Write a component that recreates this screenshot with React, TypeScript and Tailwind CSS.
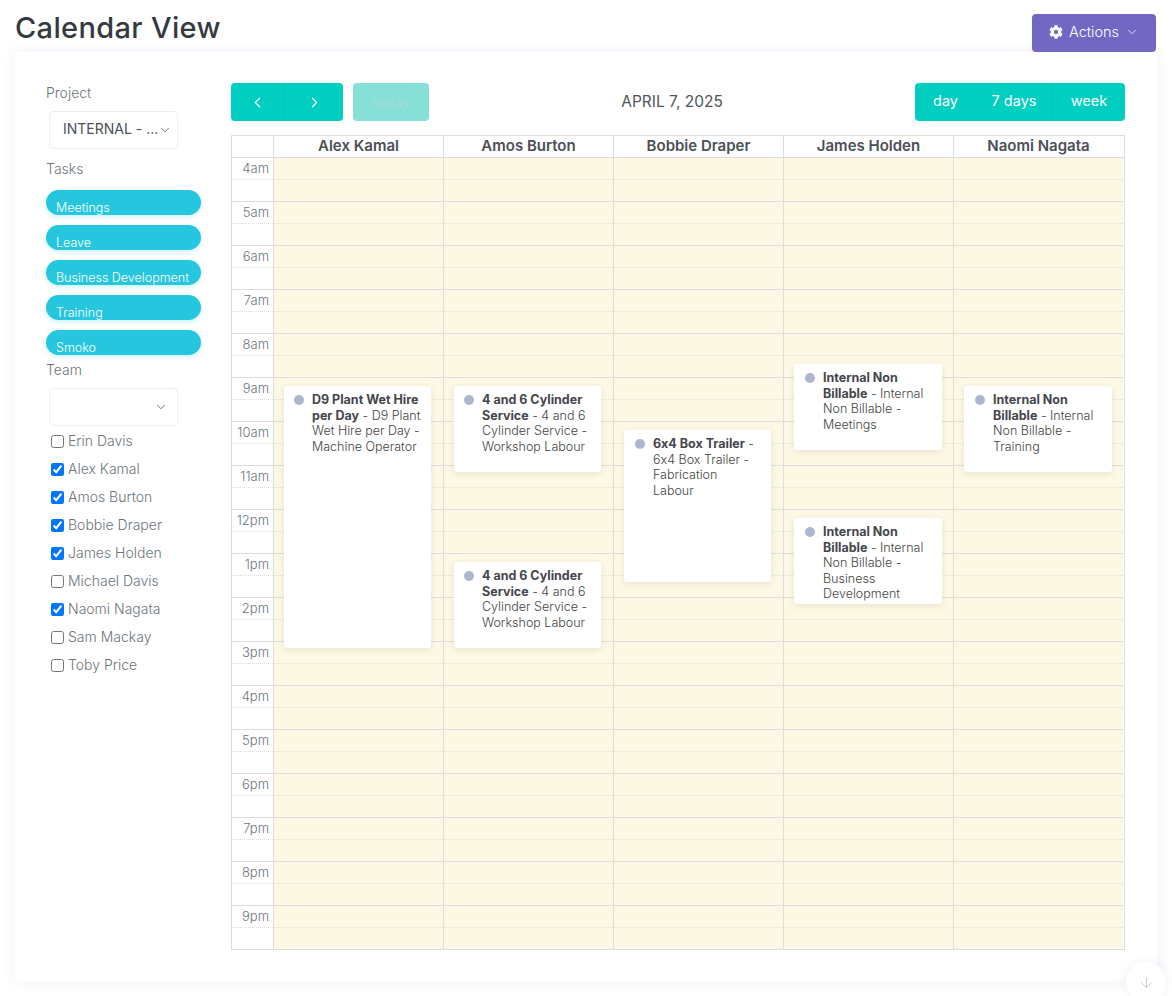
import { ChevronDown, ChevronLeft, ChevronRight, ArrowDown } from "lucide-react";
import { FaCog } from "react-icons/fa";

const HOURS = ["4am", "5am", "6am", "7am", "8am", "9am", "10am", "11am", "12pm", "1pm", "2pm", "3pm", "4pm", "5pm", "6pm", "7pm", "8pm", "9pm"];
const TASKS = ["Meetings", "Leave", "Business Development", "Training", "Smoko"];
const TEAM = [
  { name: "Erin Davis", checked: false },
  { name: "Alex Kamal", checked: true },
  { name: "Amos Burton", checked: true },
  { name: "Bobbie Draper", checked: true },
  { name: "James Holden", checked: true },
  { name: "Michael Davis", checked: false },
  { name: "Naomi Nagata", checked: true },
  { name: "Sam Mackay", checked: false },
  { name: "Toby Price", checked: false },
];

const COLUMNS = [
  {
    name: "Alex Kamal",
    inset: "left-[10px] right-[12px] pl-[10px]",
    textPad: "pr-[8px]",
    events: [{ top: "top-[228px]", height: "h-[262px]", title: "D9 Plant Wet Hire per Day", rest: " - D9 Plant Wet Hire per Day - Machine Operator" }],
  },
  {
    name: "Amos Burton",
    inset: "left-[10px] right-[12px] pl-[10px]",
    textPad: "pr-[12px]",
    events: [
      { top: "top-[228px]", height: "h-[86px]", title: "4 and 6 Cylinder Service", rest: " - 4 and 6 Cylinder Service - Workshop Labour" },
      { top: "top-[404px]", height: "h-[86px]", title: "4 and 6 Cylinder Service", rest: " - 4 and 6 Cylinder Service - Workshop Labour" },
    ],
  },
  {
    name: "Bobbie Draper",
    inset: "left-[10px] right-[12px] pl-[11px]",
    textPad: "pr-[12px]",
    events: [{ top: "top-[272px]", height: "h-[152px]", title: "6x4 Box Trailer", rest: " - 6x4 Box Trailer - Fabrication Labour" }],
  },
  {
    name: "James Holden",
    inset: "left-[10px] right-[11px] pl-[11px]",
    textPad: "pr-[12px]",
    events: [
      { top: "top-[206px]", height: "h-[86px]", title: "Internal Non Billable", rest: " - Internal Non Billable - Meetings" },
      { top: "top-[360px]", height: "h-[86px]", title: "Internal Non Billable", rest: " - Internal Non Billable - Business Development" },
    ],
  },
  {
    name: "Naomi Nagata",
    inset: "left-[10px] right-[11px] pl-[11px]",
    textPad: "pr-[12px]",
    events: [{ top: "top-[228px]", height: "h-[86px]", title: "Internal Non Billable", rest: " - Internal Non Billable - Training" }],
  },
];

function FakeSelect({ text }: { text: string }) {
  return (
    <div className="ml-[3px] flex h-[38px] w-[129px] items-center justify-between rounded border border-[#eeeeee] bg-white pl-[13px] pr-[9px] text-[14px] whitespace-nowrap text-[#495057]">
      <span className="-mt-[3px]">{text}</span>
      <ChevronDown size={14} strokeWidth={1.25} className="shrink-0 text-[#444]" />
    </div>
  );
}

export default function App() {
  return (
    <div className="relative h-[996px] overflow-hidden bg-white font-['Inter',sans-serif] text-[#6c757d] [font-feature-settings:'calt'_0]">
      <div className="relative z-10 flex h-[52px] items-start justify-between pl-[15px] pr-4">
        <h1 className="pt-[9px] text-[29px] leading-[38px] font-medium tracking-[0.35px] text-[#343a40]">Calendar View</h1>
        <button className="mt-[14px] flex h-[38px] w-[124px] items-center justify-center gap-[6px] rounded bg-[#7367c4] pb-[2px] text-[14.5px] font-light text-white">
          <FaCog size={14} />
          Actions
          <ChevronDown size={14} strokeWidth={1.25} />
        </button>
      </div>

      <div className="mr-[15px] ml-[15px] flex h-[929px] shadow-[0_0_12px_rgba(100,100,220,0.1)]">
        <aside className="w-[216px] shrink-0 pt-[31px] pl-[31px]">
          <div className="text-[14px] leading-5 font-light">Project</div>
          <div className="mt-[8px]">
            <FakeSelect text="INTERNAL - ..." />
          </div>
          <div className="mt-[10px] text-[14px] leading-5 font-light">Tasks</div>
          <div className="mt-[11px] flex w-[155px] flex-col gap-[10px]">
            {TASKS.map((t) => (
              <div key={t} className="h-[25px] overflow-hidden rounded-full bg-[#26c6de] pt-[8px] pl-[10px] text-[12.5px] leading-5 font-light whitespace-nowrap text-white shadow-[0_2px_5px_rgba(38,198,222,0.25)]">
                {t}
              </div>
            ))}
          </div>
          <div className="mt-[5px] text-[14px] leading-5 font-light">Team</div>
          <div className="mt-[8px]">
            <FakeSelect text="" />
          </div>
          <div className="flex flex-col">
            {TEAM.map((m) => (
              <label key={m.name} className="flex h-[28px] items-center text-[14px] font-light">
                <input type="checkbox" defaultChecked={m.checked} className="mt-[2px] mr-[4px] ml-[5px] h-[13px] w-[13px]" />
                {m.name}
              </label>
            ))}
          </div>
        </aside>

        <main className="w-[894px] shrink-0 pt-[31px]">
          <div className="flex h-[38px] items-center">
            <div className="flex h-[38px] w-[112px] rounded bg-[#00cec0] text-white">
              <div className="flex w-[54px] items-center justify-center border-r border-[#00c4b7]">
                <ChevronLeft size={17} strokeWidth={1.75} />
              </div>
              <div className="flex flex-1 items-center justify-center pl-[1px]">
                <ChevronRight size={17} strokeWidth={1.75} />
              </div>
            </div>
            <div className="ml-[10px] flex h-[38px] w-[76px] items-center justify-center rounded bg-[#86e0d8] text-[14px] font-medium text-[#9fdcd6]">today</div>
            <div className="flex-1 text-center text-[15.5px] text-[#50555b]">APRIL 7, 2025</div>
            <div className="flex h-[38px] w-[210px] rounded bg-[#00cec0] text-[14.5px] leading-[36px] font-normal text-white">
              <div className="w-[61px] text-center">day</div>
              <div className="w-[77px] border-r border-[#00c4b7] text-center">7 days</div>
              <div className="flex-1 text-center">week</div>
            </div>
          </div>

          <div className="mt-[14px] border border-[#dddddd]">
            <div className="grid h-[22px] grid-cols-[41px_repeat(5,170px)] border-b border-[#dddddd]">
              <div />
              {COLUMNS.map((c) => (
                <div key={c.name} className="border-l border-[#dddddd] text-center text-[15px] leading-[20px] font-semibold text-[#4b4f56]">
                  {c.name}
                </div>
              ))}
            </div>
            <div className="grid grid-cols-[41px_repeat(5,170px)]">
              <div>
                {HOURS.map((h, i) => (
                  <div key={h} className={i > 0 ? "h-[44px] border-t border-[#dddddd]" : "h-[43px]"}>
                    <div className="h-[22px] border-b border-dotted border-[#dddddd] pr-[4px] text-right text-[13px] leading-[21px] font-light">{h}</div>
                  </div>
                ))}
              </div>
              {COLUMNS.map((c) => (
                <div key={c.name} className="relative border-l border-[#dddddd] bg-[#fcf8e3]">
                  {HOURS.map((h, i) => (
                    <div key={h} className={i > 0 ? "h-[44px] border-t border-[#dddddd]" : "h-[43px]"}>
                      <div className="h-[22px] border-b border-dotted border-[#dddddd]" />
                    </div>
                  ))}
                  {c.events.map((e) => (
                    <div key={e.top} className={`absolute flex overflow-hidden rounded-[3px] bg-white pt-[6px] shadow-[0_2px_6px_rgba(60,60,60,0.1)] ${c.inset} ${e.top} ${e.height}`}>
                      <div className="mt-[3px] h-[10px] w-[10px] shrink-0 rounded-full bg-[#adb5cf]" />
                      <div className={`pl-[8px] text-[12.5px] leading-[15.5px] font-light text-[#444] ${c.textPad}`}>
                        <b className="font-bold text-[#44464d]">{e.title}</b>
                        {e.rest}
                      </div>
                    </div>
                  ))}
                </div>
              ))}
            </div>
          </div>
        </main>
      </div>

      <div className="absolute top-[962px] left-[1126px] flex h-10 w-10 items-center justify-center rounded-full bg-white shadow-[0_0_10px_rgba(100,100,220,0.1)]">
        <ArrowDown size={17} strokeWidth={1.25} className="text-[#c4c4d0]" />
      </div>
    </div>
  );
}
